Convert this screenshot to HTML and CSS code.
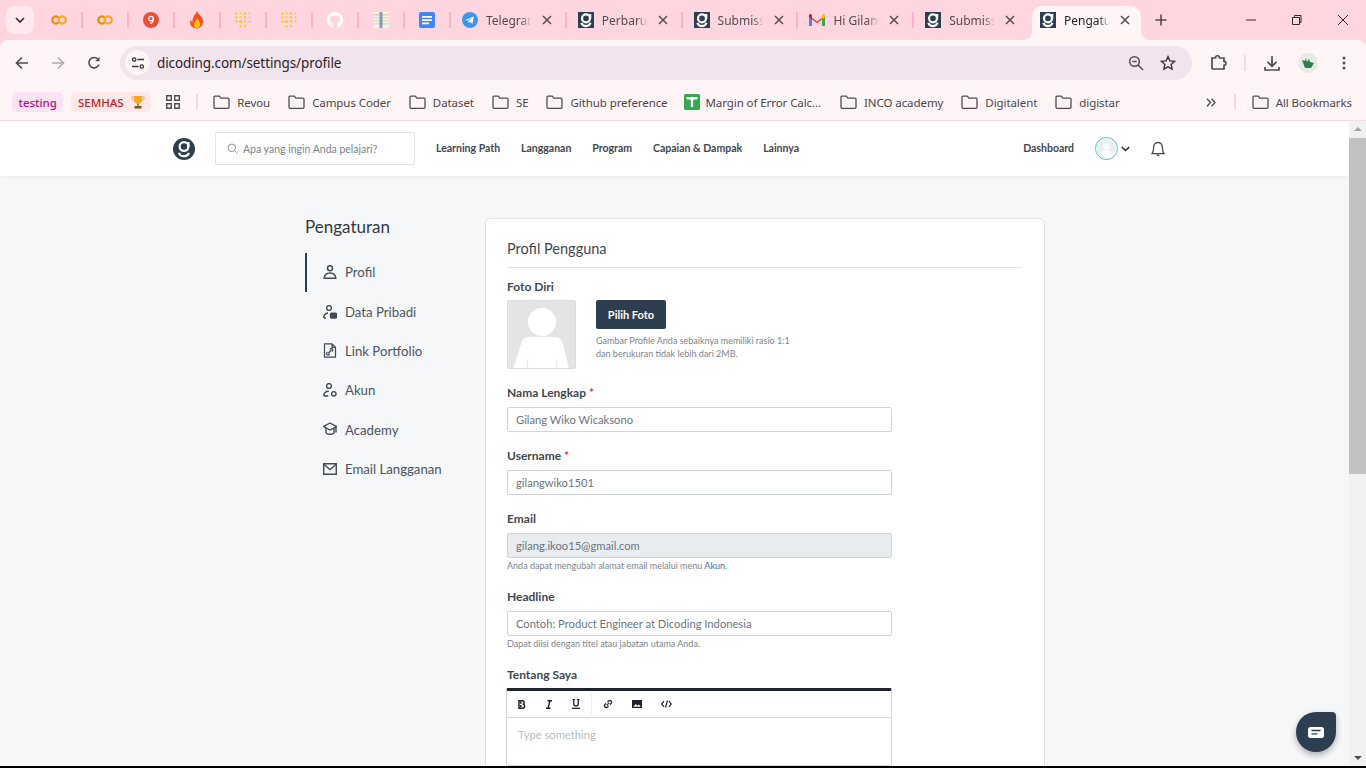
FILE: index.html
```html
<!DOCTYPE html>
<html lang="en">
<head>
    <meta charset="UTF-8">
    <title>Pengaturan Profil</title>
    <link rel="stylesheet" href="styles.css">
</head>
<body>

<svg class="sprite" width="0" height="0">
    <symbol id="g-tab" viewBox="0 0 16 16">
        <rect width="16" height="16" fill="#2d3e50"/>
        <circle cx="8" cy="6.300" r="4" fill="none" stroke="#fff" stroke-width="2.200"/>
        <path d="M12.200 2v4.500M3.300 10.800c.9 2.300 2.700 3.300 4.700 3.300s3.800-1 4.500-3.300" fill="none" stroke="#fff" stroke-width="2.200"/>
    </symbol>
    <symbol id="colab" viewBox="0 0 16 16">
        <circle cx="11.200" cy="8" r="3.600" fill="none" stroke="#f9a825" stroke-width="2.300"/>
        <path d="M7.300 5.300a3.600 3.600 0 1 0 0 5.400" fill="none" stroke="#ef8f00" stroke-width="2.300"/>
    </symbol>
    <symbol id="dots" viewBox="0 0 16 16" fill="#fdc52c">
        <circle cx="1.500" cy="1.500" r="1.200"/><circle cx="1.500" cy="5.500" r="1.200"/><circle cx="1.500" cy="9.500" r="1.200"/>
        <circle cx="5.500" cy="1" r="1"/><circle cx="5.500" cy="5" r="1"/><circle cx="5.500" cy="9.500" r="1.600"/><circle cx="5.500" cy="14.500" r="1.200"/>
        <circle cx="10" cy="1.500" r="1.200"/><circle cx="10" cy="5.500" r="1.200"/><circle cx="10" cy="9.500" r="1.200"/><circle cx="10" cy="14" r="1.200"/>
        <circle cx="14.500" cy="1.500" r="1"/><circle cx="14.500" cy="5.500" r="1"/><circle cx="14.500" cy="9.500" r="1"/>
    </symbol>
    <symbol id="folder" viewBox="0 0 17 15">
        <path d="M1 2.200c0-.6.4-1 1-1h4.300l1.600 1.900h7.100c.6 0 1 .4 1 1v8.200c0 .6-.4 1-1 1H2c-.6 0-1-.4-1-1z" fill="none" stroke="#57494e" stroke-width="1.300"/>
    </symbol>
    <symbol id="person" viewBox="0 0 14 14" fill="none" stroke="#434a54" stroke-width="1.500">
        <circle cx="7" cy="3.300" r="2.500"/>
        <path d="M1.200 13.200h11.600c-.2-3.600-1.900-5.300-5.800-5.300s-5.600 1.700-5.800 5.300z"/>
    </symbol>
    <symbol id="close" viewBox="0 0 10 10">
        <path d="M1 1l8 8M9 1l-8 8" stroke="#57494e" stroke-width="1.500" fill="none"/>
    </symbol>
</svg>

<div class="window">

    <div class="tabstrip">
        <button class="tab-search">
            <svg width="10" height="7" viewBox="0 0 10 7"><path d="M1 1l4 4 4-4" fill="none" stroke="#3a2f33" stroke-width="1.700"/></svg>
        </button>

        <div class="mini-tab"><svg width="16" height="16"><use href="#colab"/></svg></div>
        <div class="mini-tab"><svg width="16" height="16"><use href="#colab"/></svg></div>
        <div class="mini-tab">
            <svg width="16" height="16" viewBox="0 0 16 16"><circle cx="8" cy="8" r="8" fill="#ea4f38"/><circle cx="8" cy="6.600" r="2.300" fill="none" stroke="#fff" stroke-width="1.200"/><path d="M10.300 6.600c0 3-1 4.600-3.400 4.900" fill="none" stroke="#fff" stroke-width="1.200"/></svg>
        </div>
        <div class="mini-tab">
            <svg width="16" height="18" viewBox="0 0 16 18"><path d="M8 0c.6 3 4 4.700 5.400 7.600 1.800 3.800.2 9-5.400 10C2.600 17.400 0 13 1.600 9c.5 1 1.100 1.500 1.900 1.800C3.200 6.400 6 4 8 0z" fill="#f4511e"/><path d="M8.200 7c.4 2 3 3.200 3 6 0 2.500-1.600 4-3.200 4s-3.200-1.400-3-3.600c.1-2.200 2.400-3.600 3.200-6.400z" fill="#ffc107"/></svg>
        </div>
        <div class="mini-tab"><svg width="16" height="16"><use href="#dots"/></svg></div>
        <div class="mini-tab"><svg width="16" height="16"><use href="#dots"/></svg></div>
        <div class="mini-tab">
            <svg width="16" height="16" viewBox="0 0 16 16"><path fill="#fff" d="M8 0C3.580 0 0 3.580 0 8c0 3.540 2.290 6.530 5.470 7.590.4.070.55-.17.55-.38 0-.19-.01-.82-.01-1.490-2.010.37-2.530-.49-2.690-.94-.09-.23-.48-.94-.82-1.130-.28-.15-.68-.52-.01-.53.63-.01 1.080.58 1.230.82.720 1.210 1.870.87 2.330.66.070-.52.280-.87.510-1.070-1.780-.2-3.640-.89-3.640-3.950 0-.87.310-1.590.820-2.150-.08-.2-.36-1.020.08-2.120 0 0 .67-.21 2.200.82.640-.18 1.320-.27 2-.27s1.360.09 2 .27c1.530-1.040 2.200-.82 2.200-.82.440 1.100.16 1.920.08 2.120.51.560.82 1.270.82 2.150 0 3.070-1.870 3.750-3.650 3.950.29.250.54.730.54 1.480 0 1.070-.01 1.930-.01 2.200 0 .21.150.46.550.38A8.010 8.010 0 0 0 16 8c0-4.420-3.580-8-8-8z"/></svg>
        </div>
        <div class="mini-tab">
            <svg width="16" height="16" viewBox="0 0 16 16"><rect width="16" height="16" fill="#f7f3ec"/><rect y="2" width="16" height="1.500" fill="#e6d3b5"/><rect y="5" width="16" height="1.500" fill="#d5dde2"/><rect y="8" width="16" height="1.500" fill="#ecd6ba"/><rect y="11" width="16" height="1.500" fill="#d5dde2"/><rect x="6.500" width="3" height="16" fill="#7f9db3"/></svg>
        </div>
        <div class="mini-tab">
            <svg width="16" height="16" viewBox="0 0 16 16"><rect width="16" height="16" rx="2" fill="#4285f4"/><path d="M3 4h10v1.800H3zM3 7.200h10V9H3zM3 10.400h7v1.800H3z" fill="#fff"/></svg>
        </div>

        <div class="tab">
            <svg width="16" height="16" viewBox="0 0 16 16"><circle cx="8" cy="8" r="8" fill="#3f96e8"/><path d="M3.200 7.900l8.600-3.400-1.400 7.200-2.600-1.900-1.300 1.300-.2-2.200 3.600-3.100-4.500 2.800z" fill="#fff"/></svg>
            <span class="tab-title">Telegram</span>
            <svg class="tab-close" width="10" height="10"><use href="#close"/></svg>
        </div>
        <div class="tab">
            <svg width="16" height="16"><use href="#g-tab"/></svg>
            <span class="tab-title">Perbarui</span>
            <svg class="tab-close" width="10" height="10"><use href="#close"/></svg>
        </div>
        <div class="tab">
            <svg width="16" height="16"><use href="#g-tab"/></svg>
            <span class="tab-title">Submission</span>
            <svg class="tab-close" width="10" height="10"><use href="#close"/></svg>
        </div>
        <div class="tab">
            <svg width="16" height="12" viewBox="0 0 16 12"><path d="M0 12V1.500L8 7.500l8-6V12h-3V5.500L8 9.200 3 5.500V12z" fill="#ea4335"/><path d="M0 1.500C0 .3 1.300-.3 2.300.4L3 1v4.500L0 3.300z" fill="#c5221f"/><path d="M13 1l.7-.6c1-.7 2.300-.1 2.300 1.100v1.800l-3 2.200z" fill="#fbbc04"/><path d="M0 3.300l3 2.200V12H1c-.6 0-1-.4-1-1z" fill="#4285f4"/><path d="M13 5.500l3-2.200V11c0 .6-.4 1-1 1h-2z" fill="#34a853"/></svg>
            <span class="tab-title">Hi Gilang</span>
            <svg class="tab-close" width="10" height="10"><use href="#close"/></svg>
        </div>
        <div class="tab tab-plain">
            <svg width="16" height="16"><use href="#g-tab"/></svg>
            <span class="tab-title">Submission</span>
            <svg class="tab-close" width="10" height="10"><use href="#close"/></svg>
        </div>
        <div class="tab tab-active">
            <svg width="16" height="16"><use href="#g-tab"/></svg>
            <span class="tab-title">Pengaturan</span>
            <svg class="tab-close" width="10" height="10"><use href="#close"/></svg>
        </div>

        <svg class="new-tab" width="12" height="12" viewBox="0 0 12 12"><path d="M6 .5v11M.5 6h11" stroke="#57494e" stroke-width="1.600"/></svg>

        <div class="window-controls">
            <svg width="46" height="12" viewBox="0 0 46 12"><path d="M18 6h10" stroke="#33292d" stroke-width="1"/></svg>
            <svg width="46" height="12" viewBox="0 0 46 12"><path d="M18.500 3.500h7v7h-7zM20.500 3.500v-2h6.500v7h-1.500" fill="none" stroke="#33292d" stroke-width="1"/></svg>
            <svg width="46" height="12" viewBox="0 0 46 12"><path d="M18 1l10 10M28 1L18 11" stroke="#33292d" stroke-width="1"/></svg>
        </div>
    </div>

    <div class="toolbar">
        <svg class="tool-btn" width="14" height="14" viewBox="0 0 14 14"><path d="M13 7H2M7 1.500L1.500 7 7 12.500" fill="none" stroke="#57494e" stroke-width="1.700"/></svg>
        <svg class="tool-btn" width="14" height="14" viewBox="0 0 14 14"><path d="M1 7h11M7 1.500L12.500 7 7 12.500" fill="none" stroke="#b5abae" stroke-width="1.700"/></svg>
        <svg class="tool-btn" width="14" height="14" viewBox="0 0 14 14"><path d="M12 8.500A5.200 5.200 0 1 1 11 3.200" fill="none" stroke="#57494e" stroke-width="1.600"/><path d="M12.500 .8v4.400H8.100z" fill="#57494e"/></svg>

        <div class="omnibox">
            <div class="site-info">
                <svg width="14" height="14" viewBox="0 0 14 14" fill="none" stroke="#3f3337" stroke-width="1.300"><circle cx="3.200" cy="3.500" r="1.700"/><path d="M6.500 3.500H13M1 10.500h6.500"/><circle cx="10.800" cy="10.500" r="1.700"/></svg>
            </div>
            <span class="url">dicoding.com/settings/profile</span>
            <svg class="omni-icon" width="16" height="16" viewBox="0 0 16 16" fill="none" stroke="#57494e" stroke-width="1.500"><circle cx="6.500" cy="6.500" r="4.800"/><path d="M10 10l5 5M4.300 6.500h4.400"/></svg>
            <svg class="omni-icon" width="16" height="16" viewBox="0 0 16 16"><path d="M8 1.600l1.900 4.300 4.700.5-3.500 3.100 1 4.600L8 11.800l-4.100 2.300 1-4.600L1.400 6.400l4.700-.5z" fill="none" stroke="#3f3337" stroke-width="1.400"/></svg>
        </div>

        <svg class="ext-icon" width="17" height="17" viewBox="0 0 17 17"><path d="M2 4h3.500c0-3 4-3 4 0H14v3.300c2.600 0 2.600 4 0 4V15H3c-.6 0-1-.4-1-1z" fill="none" stroke="#57494e" stroke-width="1.700"/></svg>
        <span class="tool-sep"></span>
        <svg class="dl-icon" width="16" height="16" viewBox="0 0 16 16"><path d="M8 1v10M3.500 6.800L8 11.200l4.500-4.400M1 12v3h14v-3" fill="none" stroke="#57494e" stroke-width="1.700"/></svg>
        <div class="profile-pic">
            <svg width="14" height="12" viewBox="0 0 14 12"><path d="M1 3l3 1 1-3 1 4 2-3 1 3 4 1-3 5H4z" fill="#2e7d4f"/></svg>
        </div>
        <svg class="menu-icon" width="4" height="14" viewBox="0 0 4 14" fill="#57494e"><circle cx="2" cy="2" r="1.500"/><circle cx="2" cy="7" r="1.500"/><circle cx="2" cy="12" r="1.500"/></svg>
    </div>

    <div class="bookmarks">
        <span class="chip chip-pink">testing</span>
        <span class="chip chip-red">SEMHAS
            <svg width="14" height="14" viewBox="0 0 14 14"><path d="M3 1h8v4c0 2.400-1.800 3.800-4 3.800S3 7.400 3 5z" fill="#f0a92c"/><path d="M3 2H.8c0 2.400.8 3.600 2.700 4M11 2h2.200c0 2.400-.8 3.600-2.700 4" fill="none" stroke="#f0a92c"/><path d="M6 8.500h2V11H6z" fill="#c98a1c"/><path d="M3.500 11h7v2.500h-7z" fill="#7a5230"/></svg>
        </span>
        <svg class="apps-icon" width="14" height="14" viewBox="0 0 14 14" fill="none" stroke="#57494e" stroke-width="1.400"><path d="M.7.700h4.600v4.600H.7zM8.700.700h4.600v4.600H8.700zM.7 8.700h4.600v4.600H.7zM8.700 8.700h4.600v4.600H8.700z"/></svg>
        <span class="bm-sep"></span>

        <div class="bm-list">
            <span class="bm"><svg width="17" height="15"><use href="#folder"/></svg>Revou</span>
            <span class="bm"><svg width="17" height="15"><use href="#folder"/></svg>Campus Coder</span>
            <span class="bm"><svg width="17" height="15"><use href="#folder"/></svg>Dataset</span>
            <span class="bm"><svg width="17" height="15"><use href="#folder"/></svg>SE</span>
            <span class="bm"><svg width="17" height="15"><use href="#folder"/></svg>Github preference</span>
            <span class="bm bm-sheet">
                <svg width="16" height="16" viewBox="0 0 16 16"><rect width="16" height="16" rx="1.500" fill="#34a853"/><path d="M2.500 3h11v2.500H9.200V13H6.800V5.500H2.500z" fill="#fff"/></svg>Margin of Error Calc...
            </span>
            <span class="bm"><svg width="17" height="15"><use href="#folder"/></svg>INCO academy</span>
            <span class="bm"><svg width="17" height="15"><use href="#folder"/></svg>Digitalent</span>
            <span class="bm"><svg width="17" height="15"><use href="#folder"/></svg>digistar</span>
        </div>

        <svg class="more-icon" width="10" height="9" viewBox="0 0 10 9"><path d="M1 .7l3.500 3.800L1 8.300M5.500 .7L9 4.500 5.500 8.300" fill="none" stroke="#57494e" stroke-width="1.400"/></svg>
        <span class="bm-sep bm-sep-end"></span>
        <span class="bm"><svg width="17" height="15"><use href="#folder"/></svg>All Bookmarks</span>
    </div>

    <div class="viewport">
        <div class="page">
            <header class="site-header">
                <svg class="logo" width="22" height="22" viewBox="0 0 22 22">
                    <circle cx="11" cy="11" r="11" fill="#2d3e50"/>
                    <circle cx="11" cy="8.600" r="4.400" fill="none" stroke="#fff" stroke-width="2.200"/>
                    <path d="M15.400 4v5M5.800 14.800c1 2.400 3 3.400 5.200 3.400s4.200-1 5-3.400" fill="none" stroke="#fff" stroke-width="2.200"/>
                </svg>
                <div class="search-box">
                    <svg width="11" height="11" viewBox="0 0 11 11" fill="none" stroke="#8a9199" stroke-width="1"><circle cx="4.800" cy="4.800" r="3.800"/><path d="M7.600 7.600l2.900 2.900"/></svg>
                    <span>Apa yang ingin Anda pelajari?</span>
                </div>
                <nav class="main-nav">
                    <a>Learning Path</a>
                    <a>Langganan</a>
                    <a>Program</a>
                    <a>Capaian &amp; Dampak</a>
                    <a>Lainnya</a>
                </nav>
                <a class="dash-link">Dashboard</a>
                <div class="avatar">
                    <svg width="19" height="19" viewBox="0 0 19 19"><circle cx="9.500" cy="9.500" r="9.500" fill="#eceded"/><circle cx="9.500" cy="7.500" r="3.300" fill="#fff"/><path d="M3.500 16.500c.6-3.800 2.800-5 6-5s5.400 1.200 6 5a9.500 9.500 0 0 1-12 0z" fill="#fff"/></svg>
                </div>
                <svg class="caret" width="9" height="6" viewBox="0 0 9 6"><path d="M.8 1l3.700 3.500L8.200 1" fill="none" stroke="#1f2329" stroke-width="1.500"/></svg>
                <svg class="bell" width="14" height="16" viewBox="0 0 14 16"><path d="M1 12.600h12c-1.200-1.200-1.500-2.400-1.500-5.100C11.500 4 10 1.500 7 1.500S2.500 4 2.500 7.500c0 2.700-.3 3.900-1.500 5.100z" fill="none" stroke="#434a54" stroke-width="1.300"/><path d="M5.800 13.500h2.400V15H5.800z" fill="#434a54"/></svg>
            </header>

            <main class="content">
                <aside class="side">
                    <h2 class="side-title">Pengaturan</h2>
                    <ul class="side-menu">
                        <li class="side-item active">
                            <svg width="14" height="14"><use href="#person"/></svg>Profil
                        </li>
                        <li class="side-item">
                            <svg width="14" height="14" viewBox="0 0 14 14" fill="none" stroke="#434a54" stroke-width="1.400"><circle cx="6" cy="3" r="2.400"/><path d="M.8 13c0-3 1.800-4.800 4.200-5M3 13H.8"/><rect x="7.500" y="8.200" width="6" height="4.800" rx="1" fill="#434a54"/></svg>Data Pribadi
                        </li>
                        <li class="side-item">
                            <svg width="14" height="15" viewBox="0 0 14 15" fill="none" stroke="#434a54" stroke-width="1.200"><path d="M1.500 .8h7.500l3.500 3.500v9.900h-11zM9 .8v3.500h3.500"/><path d="M5 10.500l3.500-3.500M4.400 9l-.6.600a1.500 1.500 0 0 0 2.100 2.100l.7-.7M9 8.500l.6-.6a1.500 1.500 0 0 0-2.100-2.100l-.7.700"/></svg>Link Portfolio
                        </li>
                        <li class="side-item">
                            <svg width="14" height="14" viewBox="0 0 14 14" fill="none" stroke="#434a54" stroke-width="1.400"><circle cx="6" cy="3" r="2.400"/><path d="M.8 13c0-3 1.800-4.800 5-4.800M.8 13h4.500"/><circle cx="10.800" cy="10.800" r="2.200"/></svg>Akun
                        </li>
                        <li class="side-item">
                            <svg width="14" height="15" viewBox="0 0 14 15" fill="none" stroke="#434a54" stroke-width="1.400"><path d="M7 1l6.300 3.500L7 8 .7 4.500z"/><path d="M3 6v4.200c0 1.200 1.800 2 4 2s4-.8 4-2V6M13 4.500v6"/></svg>Academy
                        </li>
                        <li class="side-item">
                            <svg width="14" height="12" viewBox="0 0 14 12" fill="none" stroke="#434a54" stroke-width="1.400"><path d="M.7 .7h12.600v10.600H.7z"/><path d="M.7 1.200L7 6.500l6.300-5.300"/></svg>Email Langganan
                        </li>
                    </ul>
                </aside>

                <section class="card">
                    <h3 class="card-title">Profil Pengguna</h3>

                    <div class="photo-group">
                        <label class="field-label">Foto Diri</label>
                        <div class="photo-row">
                            <div class="photo">
                                <svg width="69" height="69" viewBox="0 0 69 69">
                                    <circle cx="35" cy="22" r="14" fill="#fff"/>
                                    <path d="M6 69l8-25c1.500-5 4-7 9-7h24c5 0 7.500 2 9 7l6 25z" fill="#fff"/>
                                    <path d="M20 69l1-10M50 69l-1-10" stroke="#e4e4e4" stroke-width="1"/>
                                </svg>
                            </div>
                            <div>
                                <button class="btn-photo">Pilih Foto</button>
                                <p class="photo-help">Gambar Profile Anda sebaiknya memiliki rasio 1:1<br>dan berukuran tidak lebih dari 2MB.</p>
                            </div>
                        </div>
                    </div>

                    <div class="field">
                        <label class="field-label">Nama Lengkap <span class="req">*</span></label>
                        <div class="input">Gilang Wiko Wicaksono</div>
                    </div>
                    <div class="field">
                        <label class="field-label">Username <span class="req">*</span></label>
                        <div class="input">gilangwiko1501</div>
                    </div>
                    <div class="field">
                        <label class="field-label">Email</label>
                        <div class="input input-disabled">gilang.ikoo15@gmail.com</div>
                        <p class="hint">Anda dapat mengubah alamat email melalui menu <span class="hint-link">Akun</span>.</p>
                    </div>
                    <div class="field">
                        <label class="field-label">Headline</label>
                        <div class="input">Contoh: Product Engineer at Dicoding Indonesia</div>
                        <p class="hint">Dapat diisi dengan titel atau jabatan utama Anda.</p>
                    </div>
                    <div class="field">
                        <label class="field-label">Tentang Saya</label>
                        <div class="editor">
                            <div class="editor-tools">
                                <div class="tool-group">
                                    <svg width="8" height="9" viewBox="0 0 8 9"><path d="M1 .7h3.300c2.400 0 2.400 3.300.4 3.500 2.600.2 2.500 4-.3 4H1zM2.800 1.800v1.900M2.800 5v2.200" fill="none" stroke="#1f2329" stroke-width="1.500"/></svg>
                                    <svg width="8" height="9" viewBox="0 0 8 9"><path d="M2.500.8h4.500M1 8.200h4.500M5 .8L3 8.200" fill="none" stroke="#1f2329" stroke-width="1.400"/></svg>
                                    <svg width="8" height="10" viewBox="0 0 8 10"><path d="M.5 .7h2.500M5 .7h2.500M1.700 .7v4c0 3 4.600 3 4.600 0v-4M0 9.300h8" fill="none" stroke="#1f2329" stroke-width="1.300"/></svg>
                                </div>
                                <div class="tool-group">
                                    <svg width="10" height="10" viewBox="0 0 10 10"><path d="M4 6l2-2M3 4.500L1.700 5.800a1.800 1.800 0 0 0 2.500 2.500L5.500 7M4.500 3l1.300-1.300a1.800 1.800 0 0 1 2.500 2.500L7 5.500" fill="none" stroke="#1f2329" stroke-width="1.300"/></svg>
                                    <svg width="10" height="8" viewBox="0 0 10 8"><path d="M0 0h10v8H0z" fill="#1f2329"/><path d="M1.200 6.800L3.800 4l1.800 1.700L7 4.500l1.800 2.300z" fill="#fff"/></svg>
                                    <svg width="11" height="8" viewBox="0 0 11 8"><path d="M3 1.200L.8 4 3 6.800M8 1.200L10.200 4 8 6.800M6.500 .5L4.500 7.500" fill="none" stroke="#1f2329" stroke-width="1.200"/></svg>
                                </div>
                            </div>
                            <div class="editor-body">Type something</div>
                        </div>
                    </div>
                </section>
            </main>

            <div class="chat-btn">
                <svg width="16" height="11" viewBox="0 0 16 11"><rect width="16" height="11" rx="2.500" fill="#fff"/><path d="M3.500 3.500h9M3.500 6.800h6" stroke="#2d3e50" stroke-width="1.300"/></svg>
            </div>
        </div>

        <div class="scrollbar">
            <span class="arrow-up"></span>
            <span class="thumb"></span>
            <span class="arrow-down"></span>
        </div>
    </div>

</div>

</body>
</html>
```

FILE: styles.css
```css
* {
    box-sizing: border-box;
}
body {
    margin: 0;
    height: 768px;
    overflow: hidden;
    background: #000;
    font-family: "Noto Sans", sans-serif;
}
svg {
    display: block;
    flex-shrink: 0;
}
.sprite {
    position: absolute;
}
.window {
    height: 766px;
    display: flex;
    flex-direction: column;
    overflow: hidden;
    background: #ffd6e0;
}

/* browser tabs */
.tabstrip {
    height: 40px;
    flex-shrink: 0;
    display: flex;
    align-items: center;
    padding-left: 6px;
}
.tab-search {
    width: 28px;
    height: 28px;
    margin-right: 3px;
    padding: 0;
    border: none;
    border-radius: 8px;
    background: #ffe9ee;
    display: flex;
    align-items: center;
    justify-content: center;
}
.mini-tab {
    width: 46px;
    height: 16px;
    display: flex;
    align-items: center;
    justify-content: center;
    border-right: 2px solid #ffb1c4;
}
.tab {
    width: 115.800px;
    height: 16px;
    display: flex;
    align-items: center;
    padding-left: 11px;
    border-right: 2px solid #ffb1c4;
    font-size: 12px;
    color: #57494e;
}
.tab-plain {
    border-right: none;
}
.tab-title {
    width: 46px;
    margin-left: 8px;
    overflow: hidden;
    white-space: nowrap;
    -webkit-mask-image: linear-gradient(to right, #000 75%, transparent);
    mask-image: linear-gradient(to right, #000 75%, transparent);
}
.tab-close {
    margin-left: 10px;
}
.tab-active {
    position: relative;
    width: 109px;
    height: 34px;
    margin: 6px 0 0 2px;
    padding: 0 0 6px 8px;
    border: none;
    border-radius: 10px 10px 0 0;
    background: #fff5f7;
    color: #2c2226;
}
.tab-active::before,
.tab-active::after {
    content: "";
    position: absolute;
    bottom: 0;
    width: 10px;
    height: 10px;
}
.tab-active::before {
    left: -10px;
    background: radial-gradient(circle at 0 0, transparent 10px, #fff5f7 10.500px);
}
.tab-active::after {
    right: -10px;
    background: radial-gradient(circle at 100% 0, transparent 10px, #fff5f7 10.500px);
}
.new-tab {
    margin-left: 14px;
}
.window-controls {
    margin-left: auto;
    display: flex;
}

/* address bar row */
.toolbar {
    height: 45px;
    flex-shrink: 0;
    display: flex;
    align-items: center;
    background: #fff5f7;
    padding: 0 20px 0 15px;
    border-radius: 8px 8px 0 0;
}
.tool-btn {
    margin-right: 22px;
}
.omnibox {
    width: 1072px;
    height: 34px;
    margin-left: -3px;
    padding: 0 16px 0 5px;
    border-radius: 17px;
    background: #f1e4ec;
    display: flex;
    align-items: center;
}
.site-info {
    width: 25px;
    height: 25px;
    border-radius: 50%;
    background: #fff5f7;
    display: flex;
    align-items: center;
    justify-content: center;
}
.url {
    flex: 1;
    margin-left: 7px;
    font-size: 13.500px;
    letter-spacing: -.1px;
    color: #2c2226;
}
.omni-icon {
    margin-left: 16px;
}
.ext-icon {
    margin-left: 18px;
}
.tool-sep {
    width: 2px;
    height: 16px;
    margin-left: 17px;
    background: #ffd6e0;
}
.dl-icon {
    margin-left: 18px;
}
.profile-pic {
    width: 20px;
    height: 20px;
    margin-left: 18px;
    border-radius: 50%;
    background: #e6ebe6;
    display: flex;
    align-items: center;
    justify-content: center;
}
.menu-icon {
    margin-left: 24px;
}

/* bookmarks row */
.bookmarks {
    height: 36px;
    flex-shrink: 0;
    display: flex;
    align-items: center;
    padding: 0 14px 1px 12px;
    background: #fff5f7;
    border-bottom: 1px solid #f8d9e1;
    font-size: 11.500px;
    letter-spacing: -.08px;
    color: #4e4448;
}
.chip {
    height: 20px;
    padding: 0 6.500px;
    border-radius: 5px;
    display: flex;
    align-items: center;
    letter-spacing: 0;
    font-weight: 500;
}
.chip-pink {
    background: #fbe3f1;
    color: #b5127f;
}
.chip-red {
    margin-left: 8px;
    gap: 7px;
    background: #fce8e8;
    color: #c5221f;
}
.apps-icon {
    margin-left: 15px;
}
.bm-sep {
    width: 2px;
    height: 16px;
    margin: 0 15px 0 16px;
    background: #ffd6e0;
}
.bm-list {
    display: flex;
    gap: 18px;
}
.bm {
    display: flex;
    align-items: center;
    gap: 7px;
    white-space: nowrap;
}
.bm-sheet {
    margin: 0 1px 0 -2px;
    gap: 6px;
}
.more-icon {
    margin-left: auto;
}
.bm-sep-end {
    margin: 0 16px 0 18px;
}

/* page area */
.viewport {
    flex: 1;
    min-height: 0;
    display: flex;
}
.page {
    flex: 1;
    position: relative;
    overflow: hidden;
    background: #f6f7f9;
    font-family: "Lato", sans-serif;
    color: #3f4750;
}
.site-header {
    height: 55px;
    padding-left: 173px;
    display: flex;
    align-items: center;
    background: #fff;
    box-shadow: 0 1px 4px rgba(0, 0, 0, .05);
    font-size: 10.500px;
    font-weight: 700;
    color: #3f4750;
}
.search-box {
    width: 200px;
    height: 33px;
    margin-left: 20px;
    padding-left: 11px;
    display: flex;
    align-items: center;
    gap: 5px;
    border: 1px solid #e1e3e6;
    border-radius: 2px;
    font-weight: 400;
    color: #7d848c;
}
.main-nav {
    margin-left: 21px;
    margin-bottom: 2px;
    display: flex;
    gap: 21px;
}
.dash-link {
    margin-left: auto;
    margin-bottom: 2px;
}
.avatar {
    width: 23px;
    height: 23px;
    margin-left: 21px;
    border: 1px solid #2fcfcf;
    border-radius: 50%;
    display: flex;
    align-items: center;
    justify-content: center;
}
.caret {
    margin-left: 3px;
}
.bell {
    margin: 0 184px 0 21px;
}
.content {
    display: flex;
    align-items: flex-start;
    padding: 42px 0 0 305px;
}
.side {
    width: 180px;
    flex-shrink: 0;
}
.side-title {
    margin: 0 0 17px;
    font-size: 17px;
    line-height: 18px;
    font-weight: 400;
    color: #333a42;
}
.side-menu {
    margin: 0;
    padding: 0;
    list-style: none;
}
.side-item {
    height: 39.400px;
    padding: 0 0 1px 16px;
    display: flex;
    align-items: center;
    gap: 8px;
    border-left: 2px solid transparent;
    font-size: 13.200px;
    color: #4b5560;
}
.side-item.active {
    border-left-color: #2d3e50;
}
.card {
    width: 560px;
    flex-shrink: 0;
    padding: 20px 22px 60px 21px;
    background: #fff;
    border: 1px solid #dfe1e4;
    border-radius: 6px;
}
.card-title {
    margin: 0 0 12px;
    padding-bottom: 8px;
    border-bottom: 1px solid #e2e3e5;
    font-size: 14.500px;
    line-height: 20px;
    font-weight: 400;
    color: #3f4750;
}
.field-label {
    display: block;
    height: 14px;
    line-height: 14px;
    margin-bottom: 7px;
    font-size: 12px;
    font-weight: 700;
    color: #3f4750;
}
.req {
    color: #d9363e;
}
.photo-group {
    margin-bottom: 17px;
}
.photo-group .field-label {
    margin-bottom: 5.500px;
}
.photo-row {
    display: flex;
    gap: 20px;
}
.photo {
    width: 69px;
    height: 69px;
    border: 1px solid #dcdcdc;
    border-radius: 2px;
    background: #e4e4e4;
    overflow: hidden;
}
.photo svg {
    margin: -1px;
}
.btn-photo {
    width: 70px;
    height: 29px;
    padding: 0;
    border: none;
    border-radius: 2px;
    background: #2d3e50;
    color: #fff;
    font-family: inherit;
    font-size: 11px;
    font-weight: 700;
}
.photo-help {
    margin: 5px 0 0;
    font-size: 9px;
    line-height: 13px;
    color: #7d848c;
}
.field {
    margin-bottom: 16.500px;
}
.input {
    width: 385px;
    height: 25.500px;
    padding: 0 8px;
    display: flex;
    align-items: center;
    border: 1px solid #ced4da;
    border-radius: 2px;
    background: #fff;
    font-size: 11.200px;
    color: #6c757d;
}
.input-disabled {
    background: #e9ecef;
}
.hint {
    height: 15px;
    margin: 0;
    line-height: 15px;
    font-size: 9px;
    color: #7d848c;
}
.hint-link {
    color: #3f6f9f;
}
.editor {
    width: 386px;
    margin: -.5px 0 0 -1px;
    border: 1px solid #d5d5d5;
    border-top: 3px solid #1f2329;
    border-radius: 2px;
}
.editor-tools {
    height: 27px;
    display: flex;
    align-items: center;
    border-bottom: 1px solid #d5d5d5;
}
.tool-group {
    height: 22px;
    padding: 0 11px;
    display: flex;
    align-items: center;
    gap: 19px;
    border-right: 1px solid #eee;
}
.tool-group:last-child {
    border-right: none;
}
.editor-body {
    height: 47px;
    padding: 10px 11px;
    font-size: 11.200px;
    color: #b9bcc0;
}
.chat-btn {
    position: absolute;
    right: 13px;
    bottom: 14px;
    width: 40px;
    height: 40px;
    display: flex;
    align-items: center;
    justify-content: center;
    border-radius: 50% 4px 50% 50%;
    background: #2d3e50;
    box-shadow: 0 3px 6px rgba(0, 0, 0, .3);
}

/* page scrollbar */
.scrollbar {
    width: 17px;
    flex-shrink: 0;
    display: flex;
    flex-direction: column;
    align-items: center;
    background: #f1f1f1;
}
.arrow-up,
.arrow-down {
    width: 0;
    height: 0;
    border-left: 4px solid transparent;
    border-right: 4px solid transparent;
}
.arrow-up {
    margin-top: 6px;
    border-bottom: 4px solid #a3a3a3;
}
.thumb {
    width: 100%;
    height: 336px;
    margin-top: 7px;
    background: #c1c1c1;
}
.arrow-down {
    margin-top: auto;
    margin-bottom: 6px;
    border-top: 4px solid #505050;
}
```
